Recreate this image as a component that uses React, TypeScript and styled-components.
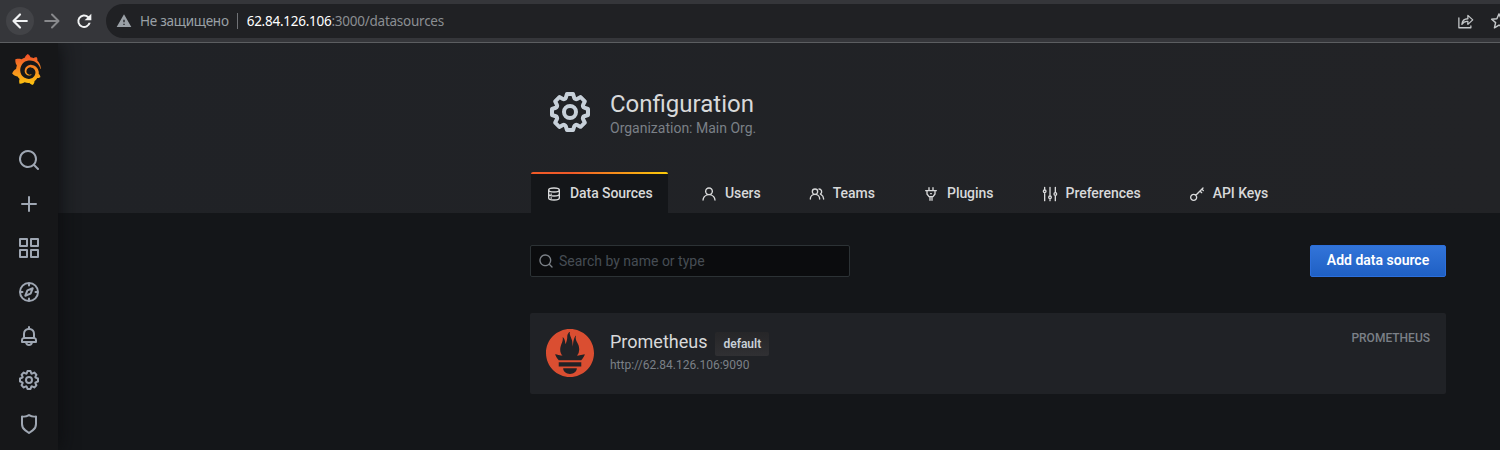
import React from "react";
import styled, { createGlobalStyle } from "styled-components";
import { SiGrafana, SiPrometheus } from "react-icons/si";
import { MdWarning } from "react-icons/md";

const GlobalStyle = createGlobalStyle`
  *, *::before, *::after { box-sizing: border-box; }
  body {
    margin: 0;
    background: #141619;
    color: #d8d9da;
    font-family: Roboto, "Liberation Sans", sans-serif;
    font-size: 14px;
    overflow: hidden;
  }
`;

const Window = styled.div`
  display: flex;
  flex-direction: column;
  width: 100%;
  height: 450px;
  overflow: hidden;
`;

/* ---------- browser toolbar ---------- */

const BrowserBar = styled.header`
  display: flex;
  align-items: center;
  flex: none;
  height: 43px;
  padding-left: 6px;
  background: #35363a;
  border-bottom: 1px solid #5c5e61;
`;

const BrowserButton = styled.button<{ $hovered?: boolean; $color?: string }>`
  display: grid;
  place-items: center;
  flex: none;
  width: 28px;
  height: 28px;
  margin-right: 4px;
  padding: 0;
  border: 0;
  border-radius: 50%;
  background: ${(p) => (p.$hovered ? "#424347" : "transparent")};
  color: ${(p) => p.$color ?? "#f1f3f4"};
`;

const AddressBar = styled.div`
  display: flex;
  align-items: center;
  flex: 1;
  height: 34px;
  margin-left: 4px;
  margin-right: -20px;
  padding-left: 10px;
  border-radius: 17px;
  background: #202124;
  color: #8b8e92;
  font-family: "Noto Sans", "Open Sans", sans-serif;
  font-size: 13.5px;
  line-height: 20px;
  white-space: nowrap;
`;

const Security = styled.span`
  margin-left: 8px;
  color: #9aa0a6;
  letter-spacing: -0.25px;
`;

const Divider = styled.span`
  width: 1px;
  height: 16px;
  margin: 0 9px 0 8px;
  background: #707276;
`;

const Url = styled.span`
  flex: 1;
  letter-spacing: -0.25px;
`;

const Host = styled.span`
  color: #ffffff;
`;

const AddressActions = styled.span`
  display: flex;
  align-items: center;
  gap: 15px;
  width: 63px;
  color: #c4c7c9;
`;

/* ---------- application shell ---------- */

const Shell = styled.div`
  display: flex;
  flex: 1;
  min-height: 0;
  overflow: hidden;
`;

const Sidebar = styled.nav`
  position: relative;
  z-index: 1;
  display: flex;
  flex-direction: column;
  align-items: center;
  flex: none;
  width: 58px;
  padding-top: 11px;
  background: #161719;
  box-shadow: 0 0 20px #0b0c0e;
`;

const Logo = styled.a`
  display: block;
  height: 34px;
  margin: 0 0 50px -5px;
  svg { display: block; }
  path { fill: url(#logoGradient); }
`;

const NavItem = styled.a`
  display: grid;
  place-items: center;
  width: 58px;
  height: 44px;
  color: #9fa7b3;
`;

const Main = styled.main`
  display: flex;
  flex-direction: column;
  flex: 1;
  min-width: 0;
`;

const PageHeader = styled.section`
  display: flex;
  flex-direction: column;
  justify-content: space-between;
  height: 170px;
  padding: 45px 54px 0 472px;
  background: linear-gradient(90deg, #202226, #222326);
`;

const Heading = styled.div`
  display: flex;
  align-items: flex-start;
  padding-left: 16px;
  color: #c7d0d9;
`;

const HeadingText = styled.div`
  margin-left: 16px;
`;

const Title = styled.h1`
  margin: 0;
  color: #d8d9da;
  font-size: 24px;
  font-weight: 400;
  line-height: 32px;
`;

const Subtitle = styled.div`
  color: #7b8087;
  line-height: 16px;
`;

const Tabs = styled.div`
  display: flex;
  gap: 18.2px;
  margin-left: 1px;
`;

const Tab = styled.a<{ $active?: boolean }>`
  position: relative;
  display: flex;
  align-items: center;
  gap: 8px;
  height: 41px;
  padding: 2px 15px 0;
  border-radius: 2px 2px 0 0;
  background: ${(p) => (p.$active ? "#141619" : "transparent")};
  color: #d8d9da;
  font-weight: 500;
  letter-spacing: -0.06px;
  line-height: 20px;
  overflow: hidden;
  &::before {
    content: "";
    display: ${(p) => (p.$active ? "block" : "none")};
    position: absolute;
    inset: 0 0 auto;
    height: 2px;
    background: linear-gradient(to right, #f05a28 30%, #fbca0a 99%);
  }
`;

const TabLabel = styled.span`
  padding-bottom: 2px;
`;

const Content = styled.section`
  display: flex;
  flex-direction: column;
  gap: 36px;
  padding: 32px 54px 0 472px;
`;

const ActionBar = styled.div`
  display: flex;
  justify-content: space-between;
`;

const SearchBox = styled.label`
  display: flex;
  align-items: center;
  gap: 5px;
  width: 320px;
  height: 32px;
  padding: 0 7px;
  border: 1px solid #2c3235;
  border-radius: 2px;
  background: #0b0c0e;
  color: #7b8087;
`;

const SearchInput = styled.input`
  flex: 1;
  min-width: 0;
  padding: 0;
  border: 0;
  outline: 0;
  background: transparent;
  color: #c7d0d9;
  font: inherit;
  &::placeholder { color: #464c54; opacity: 1; }
`;

const PrimaryButton = styled.button`
  width: 136px;
  height: 32px;
  padding: 0 0 2px;
  border: 1px solid #2c6fdc;
  border-radius: 2px;
  background: linear-gradient(180deg, #3274d9 0%, #1f60c4 100%);
  color: #ffffff;
  font: 600 14px/28px Roboto, sans-serif;
`;

const SourceCard = styled.article`
  display: flex;
  height: 81px;
  padding: 16px;
  border-radius: 2px;
  background: #202226;
`;

const SourceLogo = styled.span`
  width: 48px;
  height: 48px;
  margin-right: 16px;
  color: #da4e31;
  svg { display: block; }
`;

const SourceBody = styled.div`
  flex: 1;
`;

const SourceTitle = styled.h2`
  display: flex;
  align-items: flex-start;
  gap: 8px;
  height: 27px;
  margin: 0;
  color: #d8d9da;
  font-size: 18px;
  font-weight: 400;
  line-height: 25px;
`;

const Badge = styled.span`
  height: 24px;
  margin-top: 3px;
  padding: 0 8px;
  border-radius: 2px;
  background: linear-gradient(180deg, #262628, #303033);
  color: #c7d0d9;
  font-size: 12px;
  font-weight: 600;
  line-height: 24px;
`;

const SourceUrl = styled.div`
  color: #7b8087;
  font-size: 12px;
  line-height: 18px;
`;

const SourceType = styled.div`
  color: #7b8087;
  font-size: 12px;
  font-weight: 500;
  line-height: 18px;
`;

/* ---------- icons ---------- */

const solid: Record<string, string> = {
  search:
    "M21.71,20.29,18,16.61A9,9,0,1,0,16.61,18l3.68,3.68a1,1,0,0,0,1.42,0A1,1,0,0,0,21.71,20.29ZM11,18a7,7,0,1,1,7-7A7,7,0,0,1,11,18Z",
  plus: "M19,11H13V5a1,1,0,0,0-2,0v6H5a1,1,0,0,0,0,2h6v6a1,1,0,0,0,2,0V13h6a1,1,0,0,0,0-2Z",
  apps: "M10,13H3a1,1,0,0,0-1,1v7a1,1,0,0,0,1,1h7a1,1,0,0,0,1-1V14A1,1,0,0,0,10,13ZM9,20H4V15H9ZM21,2H14a1,1,0,0,0-1,1v7a1,1,0,0,0,1,1h7a1,1,0,0,0,1-1V3A1,1,0,0,0,21,2ZM20,9H15V4h5Zm1,4H14a1,1,0,0,0-1,1v7a1,1,0,0,0,1,1h7a1,1,0,0,0,1-1V14A1,1,0,0,0,21,13Zm-1,7H15V15h5ZM10,2H3A1,1,0,0,0,2,3v7a1,1,0,0,0,1,1h7a1,1,0,0,0,1-1V3A1,1,0,0,0,10,2ZM9,9H4V4H9Z",
  bell: "M18,13.18V10a6,6,0,0,0-5-5.91V3a1,1,0,0,0-2,0V4.09A6,6,0,0,0,6,10v3.18A3,3,0,0,0,4,16v2a1,1,0,0,0,1,1H8.14a4,4,0,0,0,7.72,0H19a1,1,0,0,0,1-1V16A3,3,0,0,0,18,13.18ZM8,10a4,4,0,0,1,8,0v3H8Zm4,10a2,2,0,0,1-1.72-1h3.44A2,2,0,0,1,12,20Zm6-3H6V16a1,1,0,0,1,1-1H17a1,1,0,0,1,1,1Z",
  cog: "M21.32,9.55l-1.89-.63.89-1.78A1,1,0,0,0,20.13,6L18,3.87a1,1,0,0,0-1.15-.19l-1.78.89-.63-1.89A1,1,0,0,0,13.5,2h-3a1,1,0,0,0-.95.68L8.92,4.57,7.14,3.68A1,1,0,0,0,6,3.87L3.87,6a1,1,0,0,0-.19,1.15l.89,1.78-1.89.63A1,1,0,0,0,2,10.5v3a1,1,0,0,0,.68.95l1.89.63-.89,1.78A1,1,0,0,0,3.87,18L6,20.13a1,1,0,0,0,1.15.19l1.78-.89.63,1.89a1,1,0,0,0,.95.68h3a1,1,0,0,0,.95-.68l.63-1.89,1.78.89A1,1,0,0,0,18,20.13L20.13,18a1,1,0,0,0,.19-1.15l-.89-1.78,1.89-.63A1,1,0,0,0,22,13.5v-3A1,1,0,0,0,21.32,9.55ZM20,12.78l-1.2.4A2,2,0,0,0,17.64,16l.57,1.14-1.1,1.1L16,17.64a2,2,0,0,0-2.79,1.16l-.4,1.2H11.22l-.4-1.2A2,2,0,0,0,8,17.64l-1.14.57-1.1-1.1L6.36,16A2,2,0,0,0,5.2,13.18L4,12.78V11.22l1.2-.4A2,2,0,0,0,6.36,8L5.79,6.89l1.1-1.1L8,6.36A2,2,0,0,0,10.82,5.2l.4-1.2h1.56l.4,1.2A2,2,0,0,0,16,6.36l1.14-.57,1.1,1.1L17.64,8a2,2,0,0,0,1.16,2.79l1.2.4ZM12,8a4,4,0,1,0,4,4A4,4,0,0,0,12,8Zm0,6a2,2,0,1,1,2-2A2,2,0,0,1,12,14Z",
  shield:
    "M19.63,3.65a1,1,0,0,0-.84-.2,8,8,0,0,1-6.22-1.27,1,1,0,0,0-1.14,0A8,8,0,0,1,5.21,3.45a1,1,0,0,0-.84.2A1,1,0,0,0,4,4.43v7.45a9,9,0,0,0,3.77,7.33l3.65,2.6a1,1,0,0,0,1.16,0l3.65-2.6A9,9,0,0,0,20,11.88V4.43A1,1,0,0,0,19.63,3.65ZM18,11.88a7,7,0,0,1-2.93,5.7L12,19.77,8.93,17.58A7,7,0,0,1,6,11.88V5.58a10,10,0,0,0,6-1.39,10,10,0,0,0,6,1.39Z",
  user: "M15.71,12.71a6,6,0,1,0-7.42,0,10,10,0,0,0-6.22,8.18,1,1,0,0,0,2,.22,8,8,0,0,1,15.9,0,1,1,0,0,0,1,.89h.11a1,1,0,0,0,.88-1.1A10,10,0,0,0,15.71,12.71ZM12,12a4,4,0,1,1,4-4A4,4,0,0,1,12,12Z",
  users:
    "M12.3,12.22A4.92,4.92,0,0,0,14,8.5a5,5,0,0,0-10,0,4.92,4.92,0,0,0,1.7,3.72A8,8,0,0,0,1,19.5a1,1,0,0,0,2,0,6,6,0,0,1,12,0,1,1,0,0,0,2,0A8,8,0,0,0,12.3,12.22ZM9,11.5a3,3,0,1,1,3-3A3,3,0,0,1,9,11.5Zm9.74.32A5,5,0,0,0,15,3.5a1,1,0,0,0,0,2,3,3,0,0,1,3,3,3,3,0,0,1-1.5,2.59,1,1,0,0,0-.5.84,1,1,0,0,0,.45.86l.39.26.13.07a7,7,0,0,1,4,6.38,1,1,0,0,0,2,0A9,9,0,0,0,18.74,11.82Z",
  refresh:
    "M17.2 6.8A7.400 7.400 0 1 0 19.300 14h-2.300A5.200 5.200 0 1 1 15.600 8.400L12.600 11.300H20V4z",
};

const lines: Record<string, string> = {
  compass:
    "M12 3a9 9 0 1 0 0 18a9 9 0 1 0 0-18M12 3v2.500M12 18.500v2.500M3 12h2.500M18.500 12h2.500M15.700 8.300l-2.100 5.300-5.300 2.100 2.100-5.300z",
  database:
    "M4 6c0-4 16-4 16 0v12c0 4-16 4-16 0zM4 6c0 4 16 4 16 0M4 12c0 4 16 4 16 0M7.5 12.2h.6M7.5 18h.6",
  plug: "M4 7h16M9 2.500v4.500M15 2.500v4.500M6 7v5l3 4h6l3-4V7M10.500 16v5.500M13.500 16v5.500M11.5 11.5h1",
  sliders:
    "M4 2v4M4 10v12M4 6a2 2 0 1 0 0 4a2 2 0 1 0 0-4M12 2v13M12 19v3M12 15a2 2 0 1 0 0 4a2 2 0 1 0 0-4M20 2v8M20 14v8M20 10a2 2 0 1 0 0 4a2 2 0 1 0 0-4",
  key: "M7 12.5a4.5 4.5 0 1 0 0 9a4.5 4.5 0 1 0 0-9M10.2 13.8L21 3M16.5 7.5l2.5 2.5M19.3 4.7l2.2 2.2",
  back: "M20.2 12H4.5M12 4.2L4.2 12l7.8 7.8",
  forward: "M3.8 12h15.7M12 4.2l7.8 7.8-7.8 7.8",
  share: "M2.500 8v13h16v-2.500M6.500 16.500c.5-5 3.5-7.500 8-7.500V4.500l6.5 6-6.500 6v-4c-3.500-.500-6 1-8 4z",
  star: "M12 2.500l2.800 6.500 7 .6-5.300 4.600 1.600 6.900L12 17.400l-6.100 3.700 1.600-6.900L2.200 9.600l7-.6z",
};

function Icon({ name, size, weight = 2 }: { name: string; size: number; weight?: number }) {
  const filled = name in solid;
  return (
    <svg width={size} height={size} viewBox="0 0 24 24" fill="none">
      {filled ? (
        <path d={solid[name]} fill="currentColor" />
      ) : (
        <path
          d={lines[name]}
          stroke="currentColor"
          strokeWidth={weight}
          strokeLinecap="round"
          strokeLinejoin="round"
        />
      )}
    </svg>
  );
}

const navItems = ["search", "plus", "apps", "compass", "bell", "cog", "shield"];

const tabs = [
  { label: "Data Sources", icon: "database" },
  { label: "Users", icon: "user" },
  { label: "Teams", icon: "users" },
  { label: "Plugins", icon: "plug" },
  { label: "Preferences", icon: "sliders" },
  { label: "API Keys", icon: "key" },
];

export default function App() {
  return (
    <Window>
      <GlobalStyle />
      <BrowserBar>
        <BrowserButton $hovered>
          <Icon name="back" size={20} weight={2.6} />
        </BrowserButton>
        <BrowserButton $color="#88898c">
          <Icon name="forward" size={20} weight={2.4} />
        </BrowserButton>
        <BrowserButton>
          <Icon name="refresh" size={22} />
        </BrowserButton>
        <AddressBar>
          <MdWarning size={16} color="#9aa0a6" />
          <Security>Не защищено</Security>
          <Divider />
          <Url>
            <Host>62.84.126.106</Host>:3000/datasources
          </Url>
          <AddressActions>
            <Icon name="share" size={18} weight={1.7} />
            <Icon name="star" size={18} weight={1.9} />
          </AddressActions>
        </AddressBar>
      </BrowserBar>
      <Shell>
        <Sidebar>
          <Logo>
            <svg width="0" height="0" display="none">
              <defs>
                <linearGradient id="logoGradient" x1="0" y1="1" x2="0" y2="0">
                  <stop offset="0" stopColor="#fcc60e" />
                  <stop offset="0.35" stopColor="#f99b1c" />
                  <stop offset="1" stopColor="#f0502b" />
                </linearGradient>
              </defs>
            </svg>
            <SiGrafana size={31} />
          </Logo>
          {navItems.map((name) => (
            <NavItem key={name}>
              <Icon name={name} size={24} />
            </NavItem>
          ))}
        </Sidebar>
        <Main>
          <PageHeader>
            <Heading>
              <Icon name="cog" size={48} />
              <HeadingText>
                <Title>Configuration</Title>
                <Subtitle>Organization: Main Org.</Subtitle>
              </HeadingText>
            </Heading>
            <Tabs>
              {tabs.map((tab, index) => (
                <Tab key={tab.label} $active={index === 0}>
                  <Icon name={tab.icon} size={16} />
                  <TabLabel>{tab.label}</TabLabel>
                </Tab>
              ))}
            </Tabs>
          </PageHeader>
          <Content>
            <ActionBar>
              <SearchBox>
                <Icon name="search" size={16} />
                <SearchInput placeholder="Search by name or type" />
              </SearchBox>
              <PrimaryButton>Add data source</PrimaryButton>
            </ActionBar>
            <SourceCard>
              <SourceLogo>
                <SiPrometheus size={48} />
              </SourceLogo>
              <SourceBody>
                <SourceTitle>
                  Prometheus
                  <Badge>default</Badge>
                </SourceTitle>
                <SourceUrl>http://62.84.126.106:9090</SourceUrl>
              </SourceBody>
              <SourceType>PROMETHEUS</SourceType>
            </SourceCard>
          </Content>
        </Main>
      </Shell>
    </Window>
  );
}
